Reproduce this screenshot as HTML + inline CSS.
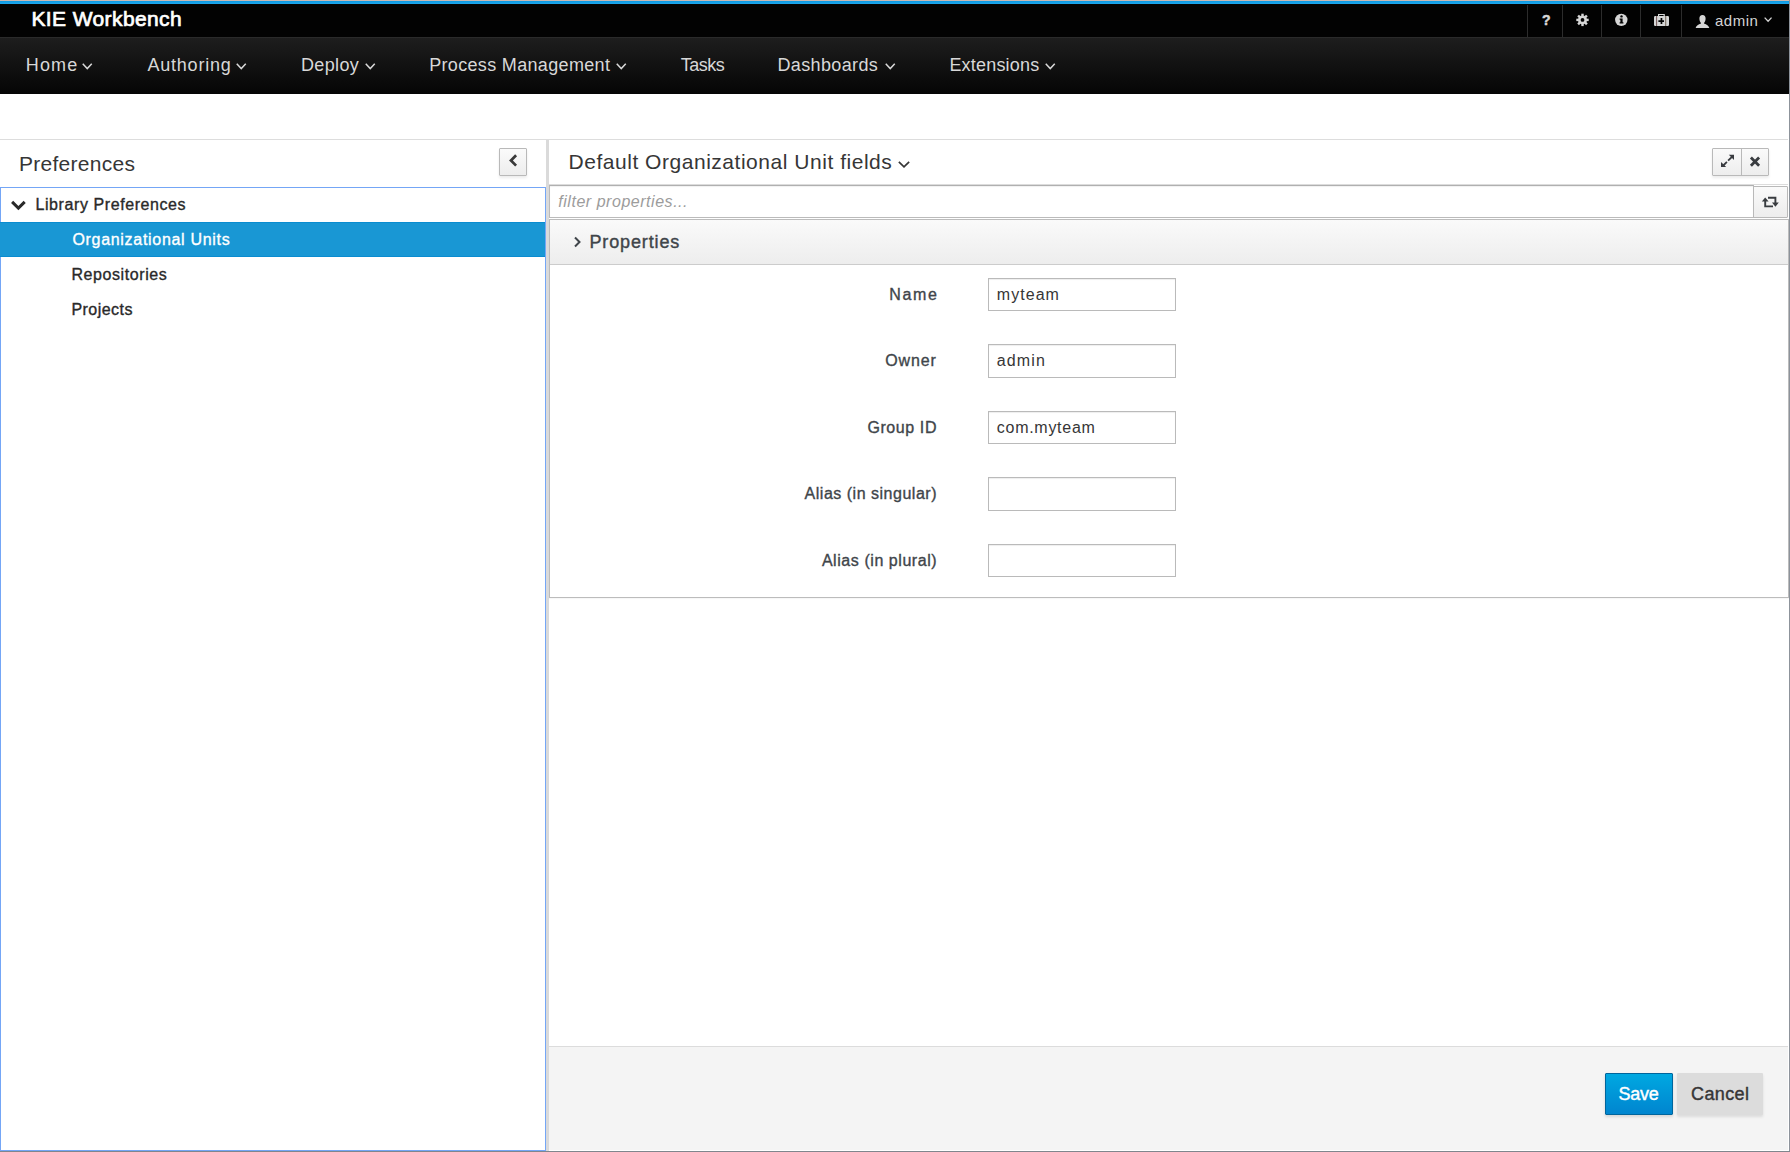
<!DOCTYPE html>
<html><head><meta charset="utf-8">
<style>
html,body{margin:0;padding:0;}
body{width:1790px;height:1152px;position:relative;overflow:hidden;background:#fff;font-family:"Liberation Sans",sans-serif;}
.a{position:absolute;}
.t{position:absolute;white-space:nowrap;line-height:1;}
</style></head><body>
<!-- top chrome -->
<div class="a" style="left:0;top:0;width:1790px;height:1px;background:#c9b9b3"></div>
<div class="a" style="left:0;top:1px;width:1789px;height:3px;background:linear-gradient(#0e98e0,#1ea8ee)"></div>
<div class="a" style="left:0;top:4px;width:1789px;height:33px;background:#020202"></div>
<!-- header separators -->
<div class="a" style="left:1527px;top:5px;width:1px;height:33px;background:#2c2c2c"></div>
<div class="a" style="left:1562px;top:5px;width:1px;height:33px;background:#2c2c2c"></div>
<div class="a" style="left:1601px;top:5px;width:1px;height:33px;background:#2c2c2c"></div>
<div class="a" style="left:1640px;top:5px;width:1px;height:33px;background:#2c2c2c"></div>
<div class="a" style="left:1681px;top:5px;width:1px;height:33px;background:#2c2c2c"></div>
<!-- nav -->
<div class="a" style="left:0;top:37px;width:1789px;height:57px;background:linear-gradient(#1e1e1e,#050505);border-top:0"></div>
<div class="a" style="left:0;top:37px;width:1789px;height:1px;background:#2a2a2a"></div>
<!-- window border -->
<div class="a" style="left:1789px;top:0;width:1px;height:1152px;background:#8d939b"></div>
<div class="a" style="left:0;top:1151px;width:1790px;height:1px;background:#80868d"></div>

<!-- panel top line -->
<div class="a" style="left:0;top:139px;width:1789px;height:1px;background:#dddddd"></div>
<!-- separator -->
<div class="a" style="left:546px;top:140px;width:3px;height:1011px;background:#dadada"></div>

<!-- left tree focus box -->
<div class="a" style="left:0;top:187px;width:544px;height:962px;border:1px solid #74a6f6"></div>
<div class="a" style="left:0;top:222px;width:545px;height:35px;background:#1997d4;box-shadow:inset 0 1px 0 #0a8cd0, inset 0 -1px 0 #0a8cd0"></div>

<!-- footer -->
<div class="a" style="left:549px;top:1046px;width:1240px;height:1px;background:#dcdcdc"></div>
<div class="a" style="left:549px;top:1047px;width:1239px;height:103px;background:#f4f4f4"></div>
<div class="a" style="left:549px;top:1150px;width:1240px;height:1px;background:#fff"></div>
<div class="a" style="left:1788px;top:94px;width:1px;height:1057px;background:#fff"></div>



<!-- COMPONENTS -->
<!-- collapse button -->
<div class="a" style="left:499px;top:148px;width:26px;height:26px;border:1px solid #b9b9b9;border-radius:1px;background:linear-gradient(#fafafa,#ededed);box-shadow:0 2px 3px rgba(0,0,0,0.08)"></div>
<svg class="a" style="left:506px;top:151px" width="16" height="20" viewBox="0 0 16 20"><path d="M10.1 4.3 L4.95 9.45 L10.1 14.6" fill="none" stroke="#393939" stroke-width="2.7"/></svg>
<!-- expand/close group -->
<div class="a" style="left:1712px;top:148px;width:55px;height:26px;border:1px solid #b9b9b9;border-radius:1px;background:linear-gradient(#fafafa,#ededed);box-shadow:0 2px 3px rgba(0,0,0,0.08)"></div>
<div class="a" style="left:1741px;top:149px;width:1px;height:26px;background:#b9b9b9"></div>
<!-- filter -->
<div class="a" style="left:549px;top:184px;width:1239px;height:1px;background:#dcdcdc"></div>
<div class="a" style="left:549px;top:185px;width:1203px;height:31px;border:1px solid #bbbbbb;border-top-color:#b0b0b0;background:#fff;box-shadow:inset 0 1px 1px rgba(0,0,0,0.06)"></div>
<div class="a" style="left:1753px;top:186px;width:33px;height:30px;border:1px solid #b9b9b9;border-radius:0 1px 1px 0;background:linear-gradient(#fafafa,#ededed)"></div>
<!-- properties box -->
<div class="a" style="left:549px;top:219px;width:1238px;height:377px;border:1px solid #bcbcbc;background:#fff;box-shadow:0 1px 1px rgba(0,0,0,0.03)"></div>
<div class="a" style="left:550px;top:220px;width:1238px;height:44px;background:linear-gradient(#fafafa,#ededed);border-bottom:1px solid #cccccc"></div>
<svg class="a" style="left:570px;top:234px" width="14" height="16" viewBox="0 0 14 16"><path d="M5 3.5 L9.5 8 L5 12.5" fill="none" stroke="#40454a" stroke-width="2"/></svg>
<!-- inputs -->
<div class="a" style="left:988px;top:278px;width:186px;height:31px;border:1px solid #bababa;background:#fff;box-shadow:inset 0 1px 1px rgba(0,0,0,0.07)"></div>
<div class="a" style="left:988px;top:344px;width:186px;height:32px;border:1px solid #bababa;background:#fff;box-shadow:inset 0 1px 1px rgba(0,0,0,0.07)"></div>
<div class="a" style="left:988px;top:411px;width:186px;height:31px;border:1px solid #bababa;background:#fff;box-shadow:inset 0 1px 1px rgba(0,0,0,0.07)"></div>
<div class="a" style="left:988px;top:477px;width:186px;height:32px;border:1px solid #bababa;background:#fff;box-shadow:inset 0 1px 1px rgba(0,0,0,0.07)"></div>
<div class="a" style="left:988px;top:544px;width:186px;height:31px;border:1px solid #bababa;background:#fff;box-shadow:inset 0 1px 1px rgba(0,0,0,0.07)"></div>
<!-- save/cancel -->
<div class="a" style="left:1605px;top:1073px;width:66px;height:40px;border:1px solid #00659c;border-radius:1px;background:linear-gradient(#00a8e1,#0085cf);box-shadow:0 2px 3px rgba(0,0,0,0.12)"></div>
<div class="a" style="left:1677px;top:1073px;width:86px;height:42px;border-radius:1px;background:#dcdcdc;box-shadow:0 2px 3px rgba(0,0,0,0.1)"></div>
<!-- tree chevron down -->
<svg class="a" style="left:8px;top:196px" width="20" height="18" viewBox="0 0 20 18"><path d="M3.05 6.92 L5.17 4.8 L10.4 10.03 L15.63 4.8 L17.75 6.92 L10.4 14.27 Z" fill="#292929"/></svg>

<!-- ICONS -->
<svg class="a" style="left:80px;top:61px" width="14.5" height="10" viewBox="0 0 14.5 10"><path d="M2.75 2.75 L7.25 7.55 L11.75 2.75" fill="none" stroke="#d8d8d8" stroke-width="1.5"/></svg>
<svg class="a" style="left:233.9px;top:61px" width="14.5" height="10" viewBox="0 0 14.5 10"><path d="M2.75 2.75 L7.25 7.55 L11.75 2.75" fill="none" stroke="#d8d8d8" stroke-width="1.5"/></svg>
<svg class="a" style="left:362.8px;top:61px" width="14.5" height="10" viewBox="0 0 14.5 10"><path d="M2.75 2.75 L7.25 7.55 L11.75 2.75" fill="none" stroke="#d8d8d8" stroke-width="1.5"/></svg>
<svg class="a" style="left:613.8px;top:61px" width="14.5" height="10" viewBox="0 0 14.5 10"><path d="M2.75 2.75 L7.25 7.55 L11.75 2.75" fill="none" stroke="#d8d8d8" stroke-width="1.5"/></svg>
<svg class="a" style="left:882.5px;top:61px" width="14.5" height="10" viewBox="0 0 14.5 10"><path d="M2.75 2.75 L7.25 7.55 L11.75 2.75" fill="none" stroke="#d8d8d8" stroke-width="1.5"/></svg>
<svg class="a" style="left:1043.4px;top:61px" width="14.5" height="10" viewBox="0 0 14.5 10"><path d="M2.75 2.75 L7.25 7.55 L11.75 2.75" fill="none" stroke="#d8d8d8" stroke-width="1.5"/></svg>
<svg class="a" style="left:896px;top:158.5px" width="16" height="10.4" viewBox="0 0 16 10.4"><path d="M2.85 2.85 L8.0 7.8500000000000005 L13.15 2.85" fill="none" stroke="#363636" stroke-width="1.7"/></svg>
<svg class="a" style="left:1762px;top:15px" width="12.2" height="8.6" viewBox="0 0 12.2 8.6"><path d="M2.65 2.65 L6.1 6.249999999999999 L9.549999999999999 2.65" fill="none" stroke="#d4d4d4" stroke-width="1.3"/></svg>
<div class="t" style="left:1542px;top:13px;font-size:14px;font-weight:bold;color:#d6d6d6;-webkit-text-stroke:0.5px #d6d6d6">?</div>
<svg class="a" style="left:1574px;top:12px" width="17" height="16" viewBox="-8.5 -7.9 17 16"><g fill="#d6d6d6"><rect x="-1.2" y="-6.2" width="2.4" height="2.6" transform="rotate(0)"/><rect x="-1.2" y="-6.2" width="2.4" height="2.6" transform="rotate(45)"/><rect x="-1.2" y="-6.2" width="2.4" height="2.6" transform="rotate(90)"/><rect x="-1.2" y="-6.2" width="2.4" height="2.6" transform="rotate(135)"/><rect x="-1.2" y="-6.2" width="2.4" height="2.6" transform="rotate(180)"/><rect x="-1.2" y="-6.2" width="2.4" height="2.6" transform="rotate(225)"/><rect x="-1.2" y="-6.2" width="2.4" height="2.6" transform="rotate(270)"/><rect x="-1.2" y="-6.2" width="2.4" height="2.6" transform="rotate(315)"/><circle r="4.5"/></g><circle r="1.9" fill="#020202"/></svg>
<svg class="a" style="left:1614px;top:13px" width="15" height="14" viewBox="0 0 15 14"><circle cx="7.3" cy="6.85" r="6.2" fill="#d6d6d6"/><circle cx="7.5" cy="3.4" r="1.2" fill="#020202"/><path d="M5.6 5.6 H8.6 V9.3 H9.4 V10.6 H5.6 V9.3 H6.4 V6.8 H5.6 Z" fill="#020202"/></svg>
<svg class="a" style="left:1653px;top:13px" width="17" height="14" viewBox="0 0 17 14"><path d="M5 1 H11.8 V3 H10.6 V2.1 H6.2 V3 H5 Z" fill="#d6d6d6"/><rect x="1" y="3" width="15" height="10" rx="1.2" fill="#d6d6d6"/><rect x="3.2" y="3" width="0.9" height="10" fill="#6a4a4a"/><rect x="12.3" y="3" width="0.9" height="10" fill="#6a5a4a"/><path d="M7.6 5 H9.3 V7.3 H11 V9 H9.3 V11.1 H7.6 V9 H5.4 V7.3 H7.6 Z" fill="#020202"/></svg>
<svg class="a" style="left:1694px;top:14px" width="17" height="15" viewBox="0 0 17 15"><path d="M8.5 1 C10.6 1 11.6 2.4 11.6 4.6 C11.6 6.6 10.8 8.3 10 9 V9.6 C12.6 10.6 14.8 11.8 15.3 14 H1.6 C2.1 11.8 4.4 10.6 7 9.6 V9 C6.2 8.3 5.4 6.6 5.4 4.6 C5.4 2.4 6.4 1 8.5 1 Z" fill="#d6d6d6"/></svg>
<svg class="a" style="left:1720px;top:154px" width="16" height="15" viewBox="0 0 16 15"><path d="M8.8 0.8 H14 V6 Z" fill="#393c40"/><path d="M1 7.9 V13.1 H6.2 Z" fill="#393c40"/><path d="M12.2 2.6 L8.1 6.7 M6.9 7.9 L2.8 12" stroke="#393c40" stroke-width="1.8"/></svg>
<svg class="a" style="left:1748px;top:155px" width="14" height="13" viewBox="0 0 14 13"><path d="M3.9 3.6 L10.1 9.8 M10.1 3.6 L3.9 9.8" stroke="#393c40" stroke-width="2.8" stroke-linecap="square"/></svg>
<svg class="a" style="left:1760px;top:195px" width="21" height="14" viewBox="0 0 21 14"><path d="M5.2 6 V11.4 H13" fill="none" stroke="#393c40" stroke-width="1.9"/><path d="M1.8 6.6 L5.2 2.6 L8.6 6.6 Z" fill="#393c40"/><path d="M8 2.8 H15.4 V8" fill="none" stroke="#393c40" stroke-width="1.9"/><path d="M12 7.6 L15.4 11.8 L18.8 7.6 Z" fill="#393c40"/></svg>

<!-- TEXTS -->
<div class="t" style="left:31.4px;top:8px;font-size:21px;letter-spacing:0.4px;color:#fff;-webkit-text-stroke:0.7px #fff">KIE Workbench</div>
<div class="t" style="left:1715px;top:13px;font-size:15px;letter-spacing:0.5px;color:#d4d4d4">admin</div>
<div class="t" style="left:25.7px;top:56px;font-size:18px;letter-spacing:1.2px;color:#d8d8d8">Home</div>
<div class="t" style="left:147.4px;top:56px;font-size:18px;letter-spacing:0.8px;color:#d8d8d8">Authoring</div>
<div class="t" style="left:301px;top:56px;font-size:18px;letter-spacing:0.36px;color:#d8d8d8">Deploy</div>
<div class="t" style="left:429.2px;top:56px;font-size:18px;letter-spacing:0.33px;color:#d8d8d8">Process Management</div>
<div class="t" style="left:680.7px;top:56px;font-size:18px;letter-spacing:-0.5px;color:#d8d8d8">Tasks</div>
<div class="t" style="left:777.4px;top:56px;font-size:18px;letter-spacing:0.38px;color:#d8d8d8">Dashboards</div>
<div class="t" style="left:949.4px;top:56px;font-size:18px;letter-spacing:0.2px;color:#d8d8d8">Extensions</div>
<div class="t" style="left:19px;top:153px;font-size:21px;letter-spacing:0.27px;color:#363636">Preferences</div>
<div class="t" style="left:35.5px;top:197px;font-size:16px;letter-spacing:0.58px;color:#292929;-webkit-text-stroke:0.35px currentColor;">Library Preferences</div>
<div class="t" style="left:72.4px;top:232px;font-size:16px;letter-spacing:0.7px;color:#fff;-webkit-text-stroke:0.35px currentColor;">Organizational Units</div>
<div class="t" style="left:71.4px;top:267px;font-size:16px;letter-spacing:0.59px;color:#292929;-webkit-text-stroke:0.35px currentColor;">Repositories</div>
<div class="t" style="left:71.4px;top:302px;font-size:16px;letter-spacing:0.47px;color:#292929;-webkit-text-stroke:0.35px currentColor;">Projects</div>
<div class="t" style="left:568.5px;top:150.6px;font-size:21px;letter-spacing:0.53px;color:#363636">Default Organizational Unit fields</div>
<div class="t" style="left:558.3px;top:194px;font-size:16px;font-style:italic;letter-spacing:0.53px;color:#9c9c9c">filter properties...</div>
<div class="t" style="left:589.5px;top:233px;font-size:18px;letter-spacing:0.86px;color:#40454a;-webkit-text-stroke:0.4px currentColor;">Properties</div>
<div class="t" style="left:889.3px;top:287px;font-size:16px;letter-spacing:1.63px;color:#40454a;-webkit-text-stroke:0.35px currentColor;">Name</div>
<div class="t" style="left:885.3px;top:353px;font-size:16px;letter-spacing:0.87px;color:#40454a;-webkit-text-stroke:0.35px currentColor;">Owner</div>
<div class="t" style="left:867.4px;top:420px;font-size:16px;letter-spacing:0.59px;color:#40454a;-webkit-text-stroke:0.35px currentColor;">Group ID</div>
<div class="t" style="left:804.6px;top:486px;font-size:16px;letter-spacing:0.51px;color:#40454a;-webkit-text-stroke:0.35px currentColor;">Alias (in singular)</div>
<div class="t" style="left:821.9px;top:553px;font-size:16px;letter-spacing:0.56px;color:#40454a;-webkit-text-stroke:0.35px currentColor;">Alias (in plural)</div>
<div class="t" style="left:996.8px;top:287px;font-size:16px;letter-spacing:1.04px;color:#363636">myteam</div>
<div class="t" style="left:996.8px;top:353px;font-size:16px;letter-spacing:1.1px;color:#363636">admin</div>
<div class="t" style="left:996.8px;top:420px;font-size:16px;letter-spacing:0.72px;color:#363636">com.myteam</div>
<div class="t" style="left:1618.6px;top:1085px;font-size:18px;letter-spacing:-0.27px;color:#fff;-webkit-text-stroke:0.4px currentColor;">Save</div>
<div class="t" style="left:1691px;top:1085px;font-size:18px;letter-spacing:0.38px;color:#363636;-webkit-text-stroke:0.4px currentColor;">Cancel</div>

</body></html>
